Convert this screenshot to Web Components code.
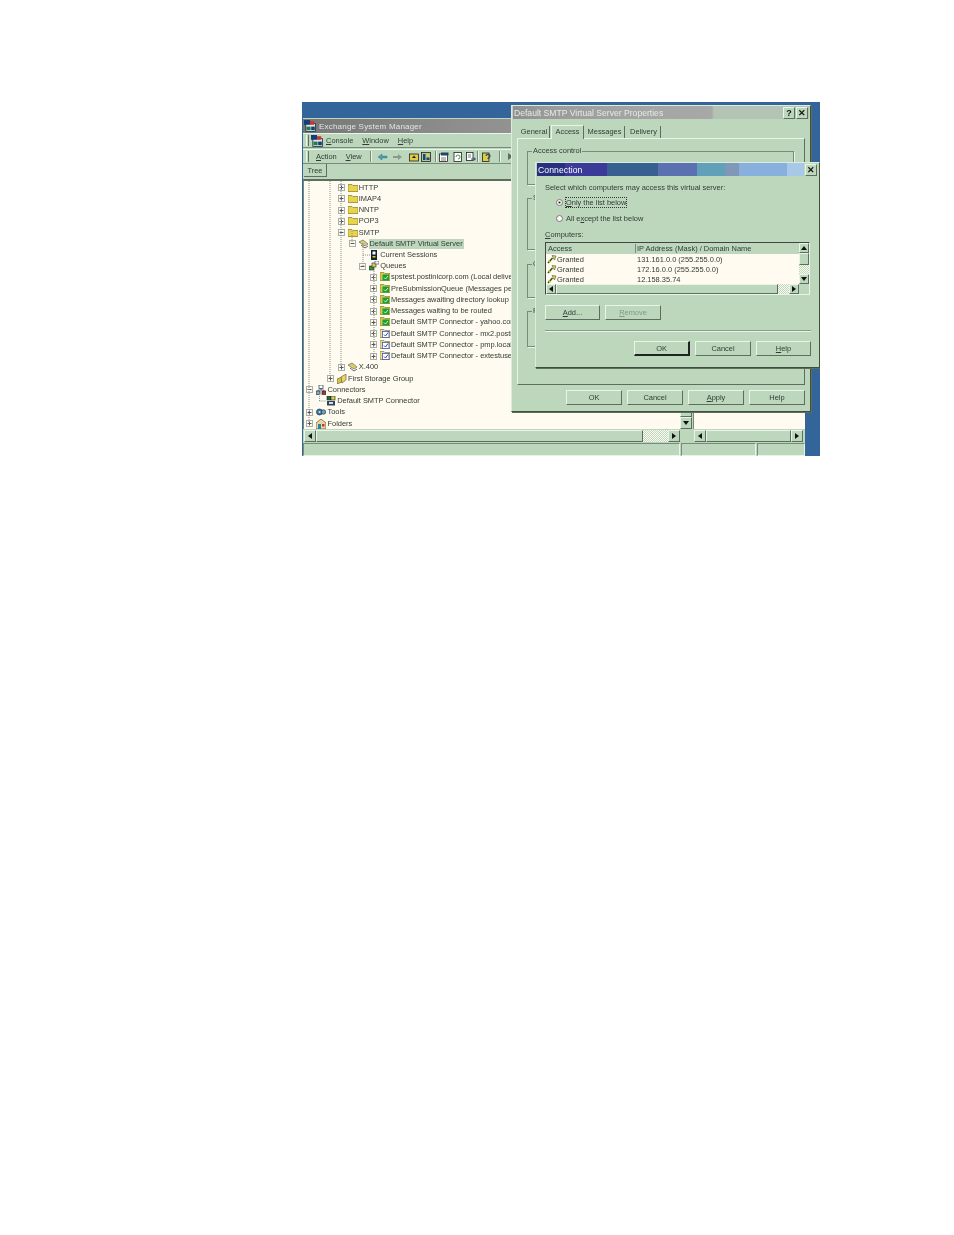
<!DOCTYPE html>
<html>
<head>
<meta charset="utf-8">
<title>Exchange System Manager</title>
<style>
  html, body { margin: 0; background: #fff; }
  body { padding: 102px 0 0 302px; font: 7.45px "Liberation Sans", Arial, sans-serif; color: #323c35; }
</style>
</head>
<body>
<x-desktop>
  <x-main-window></x-main-window>
  <x-dialog title-text="Default SMTP Virtual Server Properties" help style="left:209px;top:3px;width:300px;height:307px"
    bands="#8f8f8f 0,#9b9b9b 12%,#a4a4a4 40%,#a8a8a8 67%,#b4c4b4 68%,#b4c4b4 100%">
    <x-properties></x-properties>
  </x-dialog>
  <x-dialog title-text="Connection" dark style="left:233px;top:60px;width:285px;height:206px"
    bands="#26307f 0,#26307f 10%,#3b3a98 10%,#3b3a98 25%,#35608f 25%,#35608f 43%,#5a70b0 43%,#5a70b0 57%,#60a0b8 57%,#60a0b8 67%,#8098b8 67%,#8098b8 72%,#88b0dd 72%,#88b0dd 89%,#a8c8e8 89%,#a8c8e8 95%,#bdd7bd 95%">
    <x-connection></x-connection>
  </x-dialog>
</x-desktop>

<script>
// little 10x10 pictures, same palette as the mmc toolbar
const ICONS = {
  folder: '<path d="M0 1.5h4l1 1h5v6H0z" fill="#e8d44c" stroke="#8a7a20" stroke-width=".7"/>',
  server: '<path d="M0 3l4-2 5 4-3 2z" fill="#d8d060" stroke="#667" stroke-width=".7"/><path d="M2 6l4 3 3-2" fill="none" stroke="#667" stroke-width="1"/>',
  sessions: '<rect x="2" y="0" width="6" height="10" fill="#123" /><rect x="3.5" y="1.5" width="3" height="3" fill="#fff"/><rect x="3.5" y="6" width="3" height="1.5" fill="#dc4"/>',
  queues: '<rect x="0" y="5" width="5" height="4" fill="#3a8a3a" stroke="#234" stroke-width=".6"/><rect x="3" y="2" width="4" height="4" fill="#dc4" stroke="#234" stroke-width=".6"/><rect x="6" y="0" width="4" height="3" fill="#fff" stroke="#234" stroke-width=".6"/>',
  queue: '<path d="M0 .5h4l1 1h5v7H0z" fill="#d8c850" stroke="#7a7020" stroke-width=".6"/><rect x="2.500" y="2.500" width="6.500" height="6" fill="#18a030"/><path d="M4 5.500l1.500 1.500L8 4" fill="none" stroke="#fff" stroke-width=".8"/>',
  conn: '<path d="M0 .5h4l1 1h5v7H0z" fill="#e4dca0" stroke="#7a7020" stroke-width=".6"/><rect x="2.500" y="2.500" width="6.500" height="6" fill="#fff" stroke="#3040b0" stroke-width=".7"/><path d="M4 5.500l1.500 1.500L8 3.500" fill="none" stroke="#3040b0" stroke-width="1"/>',
  storage: '<path d="M0 5l5-2v5l-5 2z" fill="#d8c040" stroke="#554" stroke-width=".6"/><path d="M4 3l5-3v6l-4 3z" fill="#e8d860" stroke="#554" stroke-width=".6"/>',
  connectors: '<rect x="3" y="0" width="4" height="3.5" fill="#fff" stroke="#234" stroke-width=".7"/><rect x="0" y="6" width="4" height="3.5" fill="#8ab" stroke="#234" stroke-width=".7"/><rect x="6" y="6" width="4" height="3.5" fill="#a33" stroke="#234" stroke-width=".7"/><path d="M5 3.5V5M2 6V5h6v1" stroke="#234" stroke-width=".6" fill="none"/>',
  smtpconn: '<rect x="1" y="0" width="4" height="4" fill="#2a6a3a" stroke="#123" stroke-width=".6"/><rect x="5" y="0" width="4" height="4" fill="#dc4" stroke="#123" stroke-width=".6"/><rect x="1" y="5" width="8" height="4.5" fill="#345" /><rect x="3" y="6" width="4" height="2" fill="#cde"/>',
  tools: '<circle cx="3.5" cy="5" r="3" fill="#3a7a9a" stroke="#234" stroke-width=".7"/><circle cx="7.5" cy="5" r="2.2" fill="#6ab" stroke="#234" stroke-width=".7"/><circle cx="3.5" cy="5" r="1" fill="#dde"/>',
  folders: '<path d="M5 0l5 4v6H0V4z" fill="#e8d8a0" stroke="#742" stroke-width=".7"/><rect x="2" y="5" width="3" height="5" fill="#28a"/><rect x="6" y="5" width="2.5" height="2.5" fill="#c33"/>',
  key: '<path d="M1 9l4.5-5" stroke="#2a5a2a" stroke-width="1.6"/><path d="M5 1.5l4 .5-1.500 4z" fill="#e8d830" stroke="#665" stroke-width=".7"/><path d="M1.500 6l2 2.500" stroke="#e8d830" stroke-width="1.200"/>',
  mmc: '<rect x="1.500" y="3" width="8" height="6.500" fill="#dfe6e6" stroke="#234" stroke-width=".7"/><path d="M0 0h5v4H0z" fill="#123f7a"/><rect x="5" y="1" width="3.500" height="3" fill="#c33"/><rect x="2" y="5.500" width="3.500" height="3" fill="#1f7f4a"/><rect x="6" y="5.500" width="3" height="3" fill="#123f7a"/>',
  back: '<path d="M0 5l4-3v2h5v2H4v2z" fill="#4aa0b0" stroke="#2a6a7a" stroke-width=".4"/>',
  forward: '<path d="M10 5L6 2v2H1v2h5v2z" fill="#8a9a90"/>',
  up: '<rect x=".5" y="2" width="9" height="7" fill="#dc4" stroke="#222" stroke-width=".8"/><path d="M5 3.5L3 6h4z" fill="#222"/>',
  view: '<rect x=".5" y=".5" width="9" height="9" fill="#a8c8a8" stroke="#222" stroke-width=".8"/><rect x="2" y="2" width="2.5" height="6" fill="#246"/><rect x="5.5" y="2" width="3" height="2.5" fill="#dc4"/><rect x="5.5" y="5.5" width="3" height="2.5" fill="#246"/>',
  props: '<rect x=".5" y="2" width="8" height="7.5" fill="#fff" stroke="#222" stroke-width=".8"/><rect x="2" y=".5" width="7.5" height="3" fill="#246"/><path d="M2 6h5M2 8h5" stroke="#444" stroke-width=".7"/>',
  refresh: '<rect x="1" y=".5" width="7.5" height="9" fill="#fff" stroke="#222" stroke-width=".8"/><path d="M3 5a2 2 0 1 1 2 2" fill="none" stroke="#2a8a4a" stroke-width=".9"/>',
  export: '<rect x=".5" y=".5" width="6.5" height="8" fill="#fff" stroke="#222" stroke-width=".8"/><path d="M2 3h3M2 5h3" stroke="#345" stroke-width=".7"/><path d="M5 7h4M7.5 5.5L9.5 7 7.5 8.5" fill="none" stroke="#246" stroke-width=".9"/>',
  helpdoc: '<rect x=".5" y="1" width="6.5" height="8.5" fill="#dc4" stroke="#222" stroke-width=".8"/><path d="M4 4a2 1.6 0 1 1 2.5 1.5L6 7" fill="none" stroke="#246" stroke-width="1.2"/>'
}

function iconSvg(name, size) {
  return `<svg width="${size}" height="${size}" viewBox="0 0 10 10" style="display:block;flex:none">${ICONS[name]}</svg>`
}

const BEVEL = 'border:1px solid;border-color:#eaf5ea #5e6e5e #5e6e5e #eaf5ea;'
const SUNKEN = 'border:1px solid;border-color:#7a8a7a #eaf5ea #eaf5ea #7a8a7a;'

class XDesktop extends HTMLElement {
  constructor() {
    super()
    this.attachShadow({ mode: 'open' }).innerHTML = `
      <style>
        :host { display:block; position:relative; width:518px; height:354px; background:#34659a; overflow:hidden; filter:blur(.35px); }
      </style><slot></slot>`
  }
}

class XButton extends HTMLElement {
  constructor() {
    super()
    this.attachShadow({ mode: 'open' }).innerHTML = `
      <style>
        :host { display:flex; align-items:center; justify-content:center; width:56px; height:15px; box-sizing:border-box; background:#bdd7bd; ${BEVEL} }
        :host([default]) { border-color:#eaf5ea #222 #222 #eaf5ea; border-width:1px 2px 2px 1px; }
        :host([disabled]) { color:#83998a; }
      </style><slot></slot>`
  }
}

class XScrollbar extends HTMLElement {
  constructor() {
    super()
    const horizontal = !this.hasAttribute('vertical')
    const arrowA = horizontal ? 'M6 1L2 4l4 3z' : 'M4 2L1 6h6z'
    const arrowB = horizontal ? 'M2 1l4 3-4 3z' : 'M1 2h6L4 6z'
    const btn = d => `<div class="btn"><svg width="8" height="8"><path d="${d}" fill="#111"/></svg></div>`
    this.attachShadow({ mode: 'open' }).innerHTML = `
      <style>
        :host { display:flex; flex:none; flex-direction:${horizontal ? 'row' : 'column'}; background:#bdd7bd; box-sizing:border-box; ${horizontal ? 'height:var(--btn,12px)' : 'width:var(--btn,12px)'}; }
        .btn { flex:none; width:var(--btn,12px); height:var(--btn,12px); box-sizing:border-box; ${BEVEL} display:flex; align-items:center; justify-content:center; background:#bdd7bd; overflow:hidden; }
        .thumb { flex:1; ${BEVEL} }
        .dither { flex:none; ${horizontal ? 'width:var(--dither,25px)' : 'height:var(--dither,10px)'}; background:repeating-conic-gradient(#fffbf0 0 25%, #bdd7bd 0 50%) 0 0/2px 2px; }
      </style>
      ${btn(arrowA)}<div class="thumb"></div><div class="dither"></div>${btn(arrowB)}`
  }
}

class XTreeRow extends HTMLElement {
  constructor() {
    super()
    const depth = +this.getAttribute('depth')
    const exp = this.getAttribute('exp')
    const sign = exp === '+' ? '<path d="M1.5 3.5h4M3.5 1.5v4" stroke="#556"/>' : '<path d="M1.5 3.5h4" stroke="#556"/>'
    const box = exp
      ? `<svg class="exp" width="7" height="7"><rect x=".5" y=".5" width="6" height="6" fill="#fffbf0" stroke="#a8b0a8"/>${sign}</svg>`
      : `<span class="exp"></span>`
    this.attachShadow({ mode: 'open' }).innerHTML = `
      <style>
        :host { display:flex; align-items:center; height:11.24px; white-space:nowrap; padding-left:${1.5 + depth * 10.75}px; }
        .exp { flex:none; width:7px; height:7px; margin-right:3px; display:block; }
        .label { padding:0 1px; line-height:10px; ${depth === 0 ? 'margin-left:1px;' : ''} }
        :host([selected]) .label { background:#bdd7bd; }
      </style>
      ${box}${iconSvg(this.getAttribute('icon'), 10)}<span class="label"><slot></slot></span>`
  }
}

class XTree extends HTMLElement {
  constructor() {
    super()
    // depth, expander, icon, text
    const rows = [
      [3, '+', 'folder', 'HTTP'],
      [3, '+', 'folder', 'IMAP4'],
      [3, '+', 'folder', 'NNTP'],
      [3, '+', 'folder', 'POP3'],
      [3, '-', 'folder', 'SMTP'],
      [4, '-', 'server', 'Default SMTP Virtual Server', true],
      [5, '', 'sessions', 'Current Sessions'],
      [5, '-', 'queues', 'Queues'],
      [6, '+', 'queue', 'spstest.postinicorp.com (Local delivery)'],
      [6, '+', 'queue', 'PreSubmissionQueue (Messages pending submission)'],
      [6, '+', 'queue', 'Messages awaiting directory lookup'],
      [6, '+', 'queue', 'Messages waiting to be routed'],
      [6, '+', 'queue', 'Default SMTP Connector - yahoo.com'],
      [6, '+', 'conn', 'Default SMTP Connector - mx2.postini.com'],
      [6, '+', 'conn', 'Default SMTP Connector - pmp.local'],
      [6, '+', 'conn', 'Default SMTP Connector - extestuser.com'],
      [3, '+', 'server', 'X.400'],
      [2, '+', 'storage', 'First Storage Group'],
      [0, '-', 'connectors', 'Connectors'],
      [1, '', 'smtpconn', 'Default SMTP Connector'],
      [0, '+', 'tools', 'Tools'],
      [0, '+', 'folders', 'Folders']
    ]
    const lines = [
      [5, 0, 5, 242], [26, 0, 26, 198], [37, 0, 37, 186], [48, 50, 48, 62], [59, 62, 59, 85],
      [15.5, 213, 15.5, 220], [15.5, 220, 22, 220], [59, 74, 66, 74], [70, 90, 70, 175]
    ]
    this.attachShadow({ mode: 'open' }).innerHTML = `
      <style>
        :host { display:block; position:relative; flex:1; min-width:0; padding-top:1px; background:#fffbf0; overflow:hidden; }
        svg.lines { position:absolute; left:0; top:0; }
      </style>
      <svg class="lines" width="120" height="250">${lines.map(l =>
        `<line x1="${l[0]}" y1="${l[1]}" x2="${l[2]}" y2="${l[3]}" stroke="#8a928a" stroke-dasharray="1 1"/>`).join('')}</svg>
      ${rows.map(r => `<x-tree-row depth="${r[0]}" ${r[1] ? `exp="${r[1]}"` : ''} icon="${r[2]}" ${r[4] ? 'selected' : ''}>${r[3]}</x-tree-row>`).join('')}`
  }
}

class XMainWindow extends HTMLElement {
  constructor() {
    super()
    const tool = (name, gap) => `<span style="margin-left:${gap}px">${iconSvg(name, 10)}</span>`
    this.attachShadow({ mode: 'open' }).innerHTML = `
      <style>
        :host { position:absolute; left:1px; top:16px; width:502px; height:338px; display:flex; flex-direction:column; background:#bdd7bd; box-sizing:border-box; }
        .title { height:14px; flex:none; display:flex; align-items:center; gap:3px; padding-left:1px; color:#dfe8df; font-size:8px; letter-spacing:.2px;
          background:linear-gradient(90deg,#777 0,#8d8d8d 30%,#9a9a9a 59%,#a6b6a6 60%); margin-top:1px; }
        .bar { flex:none; display:flex; align-items:center; box-sizing:border-box; border-top:1px solid #eaf5ea; border-bottom:1px solid #7a8a7a; }
        .menu { height:15px; padding-left:3px; }
        .tools { height:15px; padding-left:3px; margin-top:1px; }
        .grip { width:1px; height:11px; margin-right:2px; ${BEVEL} border-width:0 1px 0 1px; flex:none; }
        .sep { flex:none; width:0; height:11px; border-left:1px solid #7a8a7a; border-right:1px solid #eaf5ea; }
        u { text-underline-offset:1px; }
        .tabbar { flex:none; height:15px; display:flex; padding-left:1px; }
        .tab { width:23px; height:13px; box-sizing:border-box; border-right:1px solid #5e6e5e; border-bottom:1px solid #5e6e5e; background:#bdd7bd; display:flex; align-items:center; justify-content:center; }
        .body { flex:1; min-height:0; display:flex; border-top:2px solid #5e6e5e; border-left:1px solid #7a8a7a; }
        .pane { width:111px; flex:none; background:#fffbf0; margin-left:1px; border-left:1px solid #7a8a7a; }
        .scrolls { flex:none; display:flex; height:13px; align-items:center; gap:14px; padding-left:1px; }
        .status { flex:none; height:13px; display:flex; gap:1px; margin-top:1px; }
        .status div { ${SUNKEN} }
      </style>
      <div class="title">${iconSvg('mmc', 12)}<span>Exchange System Manager</span></div>
      <div class="bar menu"><span class="grip"></span>${iconSvg('mmc', 12)}
        <span style="margin-left:3px"><u>C</u>onsole</span><span style="margin-left:9px"><u>W</u>indow</span><span style="margin-left:9px"><u>H</u>elp</span></div>
      <div class="bar tools"><span class="grip"></span>
        <span style="margin-left:5px"><u>A</u>ction</span><span style="margin-left:9px"><u>V</u>iew</span>
        <span class="sep" style="margin-left:8px"></span>
        ${tool('back', 6)}${tool('forward', 4)}${tool('up', 7)}${tool('view', 2)}
        <span class="sep" style="margin-left:4px"></span>
        ${tool('props', 2)}${tool('refresh', 4)}${tool('export', 3)}
        <span class="sep" style="margin-left:1px"></span>
        ${tool('helpdoc', 3)}<span class="sep" style="margin-left:7px"></span>
        <svg style="margin-left:6px" width="7" height="9"><path d="M1 1l5 3.500L1 8z" fill="#5e6e5e"/></svg></div>
      <div class="tabbar"><div class="tab">Tree</div></div>
      <div class="body"><x-tree></x-tree>
        <x-scrollbar vertical style="--dither:0px"></x-scrollbar>
        <div class="pane"></div></div>
      <div class="scrolls">
        <x-scrollbar style="width:376px"></x-scrollbar>
        <x-scrollbar style="width:109px;--dither:0px"></x-scrollbar></div>
      <div class="status"><div style="width:377px"></div><div style="width:73px"></div><div style="width:46px"></div></div>`
  }
}

class XDialog extends HTMLElement {
  constructor() {
    super()
    const help = this.hasAttribute('help') ? '<span class="cap">?</span>' : ''
    this.attachShadow({ mode: 'open' }).innerHTML = `
      <style>
        :host { position:absolute; display:flex; flex-direction:column; box-sizing:border-box; background:#bdd7bd; border:1px solid; border-color:#dcebdc #3f4f3f #3f4f3f #dcebdc; box-shadow:1px 1px 0 #5e6e5e; }
        .title { flex:none; height:13px; display:flex; align-items:center; margin:0 1px; padding-left:1px; color:#e4ece4; font-size:8.6px; position:relative; }
        :host([dark]) .title { color:#fff; letter-spacing:.1px; }
        .name { flex:1; }
        .cap { flex:none; width:10px; height:10px; margin-right:1px; ${BEVEL} background:#bdd7bd; color:#111; font:bold 9px/10px "Liberation Sans", sans-serif; text-align:center; letter-spacing:0; }
        .body { flex:1; min-height:0; display:flex; flex-direction:column; }
      </style>
      <div class="title" style="background:linear-gradient(90deg,${this.getAttribute('bands')})">
        <span class="name">${this.getAttribute('title-text')}</span>${help}<span class="cap">✕</span></div>
      <div class="body"><slot></slot></div>`
  }
}

class XGroup extends HTMLElement {
  constructor() {
    super()
    this.attachShadow({ mode: 'open' }).innerHTML = `
      <style>
        :host { display:block; position:relative; flex:none; box-sizing:border-box; border:1px solid #7a8a7a; box-shadow:1px 1px 0 #eaf5ea; }
        span { position:absolute; left:4px; top:-6px; padding:0 1px; background:#bdd7bd; line-height:10px; }
      </style><span><slot></slot></span>`
  }
}

class XProperties extends HTMLElement {
  constructor() {
    super()
    this.attachShadow({ mode: 'open' }).innerHTML = `
      <style>
        :host { display:flex; flex-direction:column; flex:1; min-height:0; padding:5px 5px 6px; }
        .tabs { display:flex; flex:none; height:14px; align-items:flex-end; gap:1px; position:relative; z-index:1; }
        .tab { height:12px; line-height:12px; text-align:center; box-sizing:border-box; border-right:1px solid #5e6e5e; }
        .on { height:14px; line-height:11px; border-left:1px solid #eaf5ea; border-top:1px solid #eaf5ea; margin-bottom:-1px; background:#bdd7bd; }
        .panel { flex:1; min-height:0; ${BEVEL} padding:12px 10px 0 9px; display:flex; flex-direction:column; }
        .buttons { flex:none; display:flex; justify-content:flex-end; gap:5px; margin-top:5px; }
        u { text-underline-offset:1px; }
      </style>
      <div class="tabs">
        <div class="tab" style="width:33px;padding-left:2px">General</div>
        <div class="tab on" style="width:33px">Access</div>
        <div class="tab" style="width:40px">Messages</div>
        <div class="tab" style="width:35px;padding-left:1px">Delivery</div>
      </div>
      <div class="panel">
        <x-group style="height:34px;margin-bottom:13px">Access control</x-group>
        <x-group style="height:52px;margin-bottom:14px">Secure communication</x-group>
        <x-group style="height:34px;margin-bottom:13px">Connection control</x-group>
        <x-group style="height:36px">Relay restrictions</x-group>
      </div>
      <div class="buttons">
        <x-button>OK</x-button><x-button>Cancel</x-button><x-button><u>A</u>pply</x-button><x-button>Help</x-button>
      </div>`
  }
}

class XConnection extends HTMLElement {
  constructor() {
    super()
    const radio = on => `<svg width="7" height="7" style="flex:none"><circle cx="3.5" cy="3.5" r="3" fill="#fffbf0" stroke="#778"/>${on ? '<circle cx="3.5" cy="3.5" r="1.1" fill="#222"/>' : ''}</svg>`
    const row = (ip) => `<div class="row">${iconSvg('key', 10)}<span class="c1">Granted</span><span>${ip}</span></div>`
    this.attachShadow({ mode: 'open' }).innerHTML = `
      <style>
        :host { display:flex; flex-direction:column; flex:1; padding:7px 8px 0 9px; }
        u { text-underline-offset:1px; }
        .lead { line-height:10px; }
        .radio { display:flex; align-items:center; gap:3px; margin-left:11px; height:10px; }
        .radio span { line-height:9px; }
        .focus { outline:1px dotted #334; }
        .list { margin:2px 1px 0 0; height:53px; box-sizing:border-box; border:1px solid; border-color:#444 #eaf5ea #eaf5ea #444; display:flex; }
        .inner { flex:1; min-width:0; display:flex; flex-direction:column; }
        .head { flex:none; height:11px; display:flex; align-items:center; background:#bdd7bd; padding-left:2px; }
        .head span:first-child { width:87px; border-right:1px solid #7a8a7a; margin-right:1px; }
        .rows { flex:1; background:#fffbf0; min-height:0; }
        .row { display:flex; align-items:center; height:10px; padding-left:1px; }
        .c1 { width:80px; }
        .buttons { display:flex; gap:5px; }
        .rule { height:0; border-top:1px solid #8a9a8a; border-bottom:1px solid #eaf5ea; margin:10px 0 9px; }
      </style>
      <div class="lead">Select which computers may access this virtual server:</div>
      <div class="radio" style="margin-top:4px">${radio(true)}<span class="focus"><u>O</u>nly the list below</span></div>
      <div class="radio" style="margin-top:6px">${radio(false)}<span>All e<u>x</u>cept the list below</span></div>
      <div class="lead" style="margin-top:7px"><u>C</u>omputers:</div>
      <div class="list">
        <div class="inner">
          <div class="head"><span>Access</span><span>IP Address (Mask) / Domain Name</span></div>
          <div class="rows">${row('131.161.0.0 (255.255.0.0)')}${row('172.16.0.0 (255.255.0.0)')}${row('12.158.35.74')}</div>
          <x-scrollbar style="--dither:11px;--btn:10px"></x-scrollbar>
        </div>
        <x-scrollbar vertical style="height:41px;--btn:10px;--dither:9px"></x-scrollbar>
      </div>
      <div class="buttons" style="margin-top:10px"><x-button style="width:55px"><u>A</u>dd...</x-button><x-button disabled><u>R</u>emove</x-button></div>
      <div class="rule"></div>
      <div class="buttons" style="justify-content:flex-end"><x-button default>OK</x-button><x-button>Cancel</x-button><x-button style="width:55px"><u>H</u>elp</x-button></div>`
  }
}

customElements.define('x-desktop', XDesktop)
customElements.define('x-button', XButton)
customElements.define('x-scrollbar', XScrollbar)
customElements.define('x-tree-row', XTreeRow)
customElements.define('x-tree', XTree)
customElements.define('x-main-window', XMainWindow)
customElements.define('x-dialog', XDialog)
customElements.define('x-group', XGroup)
customElements.define('x-properties', XProperties)
customElements.define('x-connection', XConnection)
</script>
</body>
</html>
